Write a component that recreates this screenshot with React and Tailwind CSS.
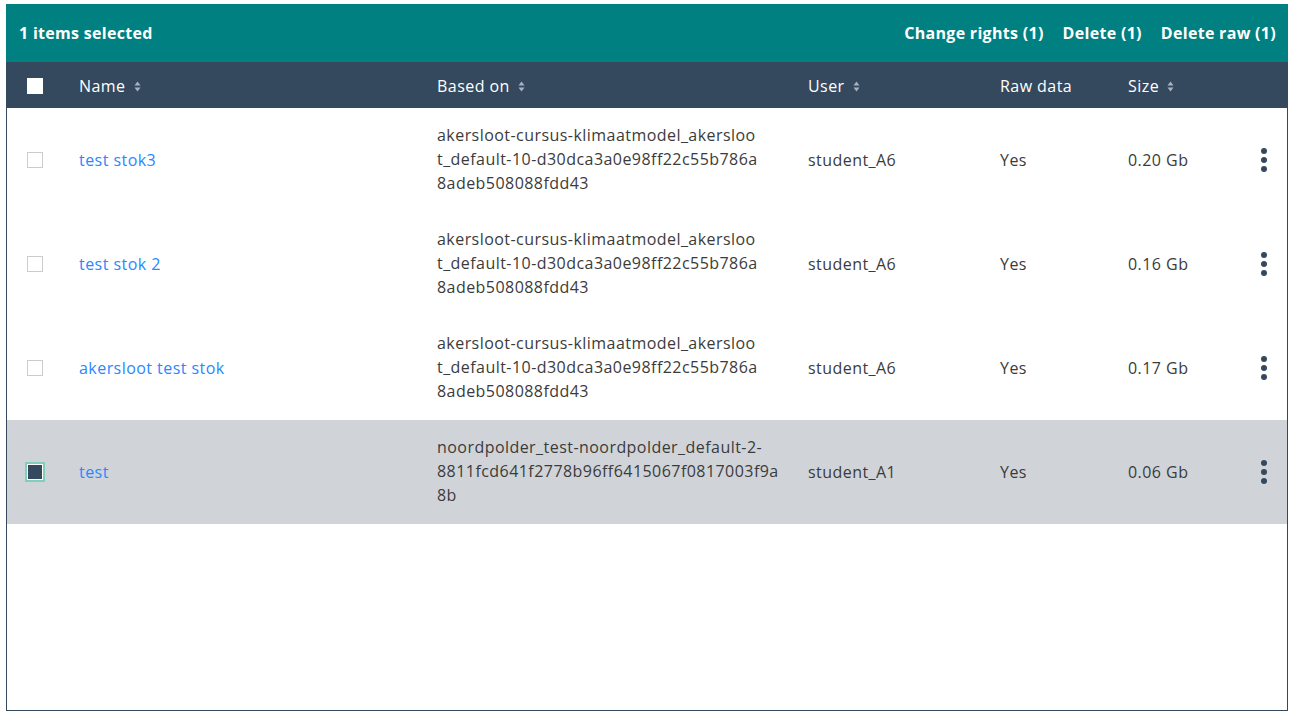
import { useState } from "react";

const rows = [
  {
    name: "test stok3",
    basedOn: ["akersloot-cursus-klimaatmodel_akersloo", "t_default-10-d30dca3a0e98ff22c55b786a", "8adeb508088fdd43"],
    user: "student_A6",
    raw: "Yes",
    size: "0.20 Gb",
  },
  {
    name: "test stok 2",
    basedOn: ["akersloot-cursus-klimaatmodel_akersloo", "t_default-10-d30dca3a0e98ff22c55b786a", "8adeb508088fdd43"],
    user: "student_A6",
    raw: "Yes",
    size: "0.16 Gb",
  },
  {
    name: "akersloot test stok",
    basedOn: ["akersloot-cursus-klimaatmodel_akersloo", "t_default-10-d30dca3a0e98ff22c55b786a", "8adeb508088fdd43"],
    user: "student_A6",
    raw: "Yes",
    size: "0.17 Gb",
  },
  {
    name: "test",
    basedOn: ["noordpolder_test-noordpolder_default-2-", "8811fcd641f2778b96ff6415067f0817003f9a", "8b"],
    user: "student_A1",
    raw: "Yes",
    size: "0.06 Gb",
  },
];

const cols = "grid grid-cols-[52px_358px_371px_192px_128px_1fr_24px] pl-5 pr-[11px] items-center";

function SortIcon() {
  return (
    <svg width="7" height="11" viewBox="0 0 7 11" className="ml-2 inline-block">
      <path d="M3.5 0.5 L6.5 4.5 L0.5 4.5 Z" fill="#a9b2bd" />
      <path d="M3.5 10.5 L6.5 6.5 L0.5 6.5 Z" fill="#a9b2bd" />
    </svg>
  );
}

function Kebab() {
  return (
    <div className="flex flex-col items-center gap-[3px]">
      <span className="w-[6px] h-[6px] rounded-full bg-[#34495e]" />
      <span className="w-[6px] h-[6px] rounded-full bg-[#34495e]" />
      <span className="w-[6px] h-[6px] rounded-full bg-[#34495e]" />
    </div>
  );
}

export default function App() {
  const [selected, setSelected] = useState([3]);

  const toggle = (i) =>
    setSelected((s) => (s.includes(i) ? s.filter((x) => x !== i) : [...s, i]));

  return (
    <div className="bg-white min-h-[717px] pt-1 font-['Open_Sans',sans-serif] text-[16px] tracking-[0.45px]">
      <div className="ml-[6px] w-[1282px] h-[707px] border border-t-0 border-[#34495e] flex flex-col">

        {/* SELECTION BAR */}
        <div className="h-[58px] bg-[#008080] -mx-px flex items-center justify-between pl-[13px] pr-[12px] text-white font-bold tracking-[0.3px]">
          <span>{selected.length} items selected</span>
          <div className="flex gap-[19px]">
            <span>Change rights ({selected.length})</span>
            <span>Delete ({selected.length})</span>
            <span>Delete raw ({selected.length})</span>
          </div>
        </div>

        {/* HEADER */}
        <div className={`${cols} h-[46px] bg-[#34495e] text-white pt-[2px]`}>
          <span className="w-4 h-4 bg-white" />
          <span className="flex items-center">Name<SortIcon /></span>
          <span className="flex items-center">Based on<SortIcon /></span>
          <span className="flex items-center">User<SortIcon /></span>
          <span>Raw data</span>
          <span className="flex items-center">Size<SortIcon /></span>
          <span />
        </div>

        {/* ROWS */}
        {rows.map((r, i) => {
          const isSel = selected.includes(i);
          return (
            <div
              key={r.name}
              className={`${cols} h-[104px] text-[#3b3b3b] ${isSel ? "bg-[#d0d4d8]" : "bg-white"}`}
            >
              <button onClick={() => toggle(i)} className="w-4 h-4 flex">
                {isSel ? (
                  <span className="w-4 h-4 bg-[#34495e] border border-white outline-2 outline-[#7fd0b8]" />
                ) : (
                  <span className="w-4 h-4 bg-white border border-[#cccccc]" />
                )}
              </button>
              <a className="text-[#2a87ff]">{r.name}</a>
              <div className="leading-6 -mt-[2px]">
                {r.basedOn.map((l) => (
                  <div key={l}>{l}</div>
                ))}
              </div>
              <span>{r.user}</span>
              <span>{r.raw}</span>
              <span>{r.size}</span>
              <Kebab />
            </div>
          );
        })}
      </div>
    </div>
  );
}
